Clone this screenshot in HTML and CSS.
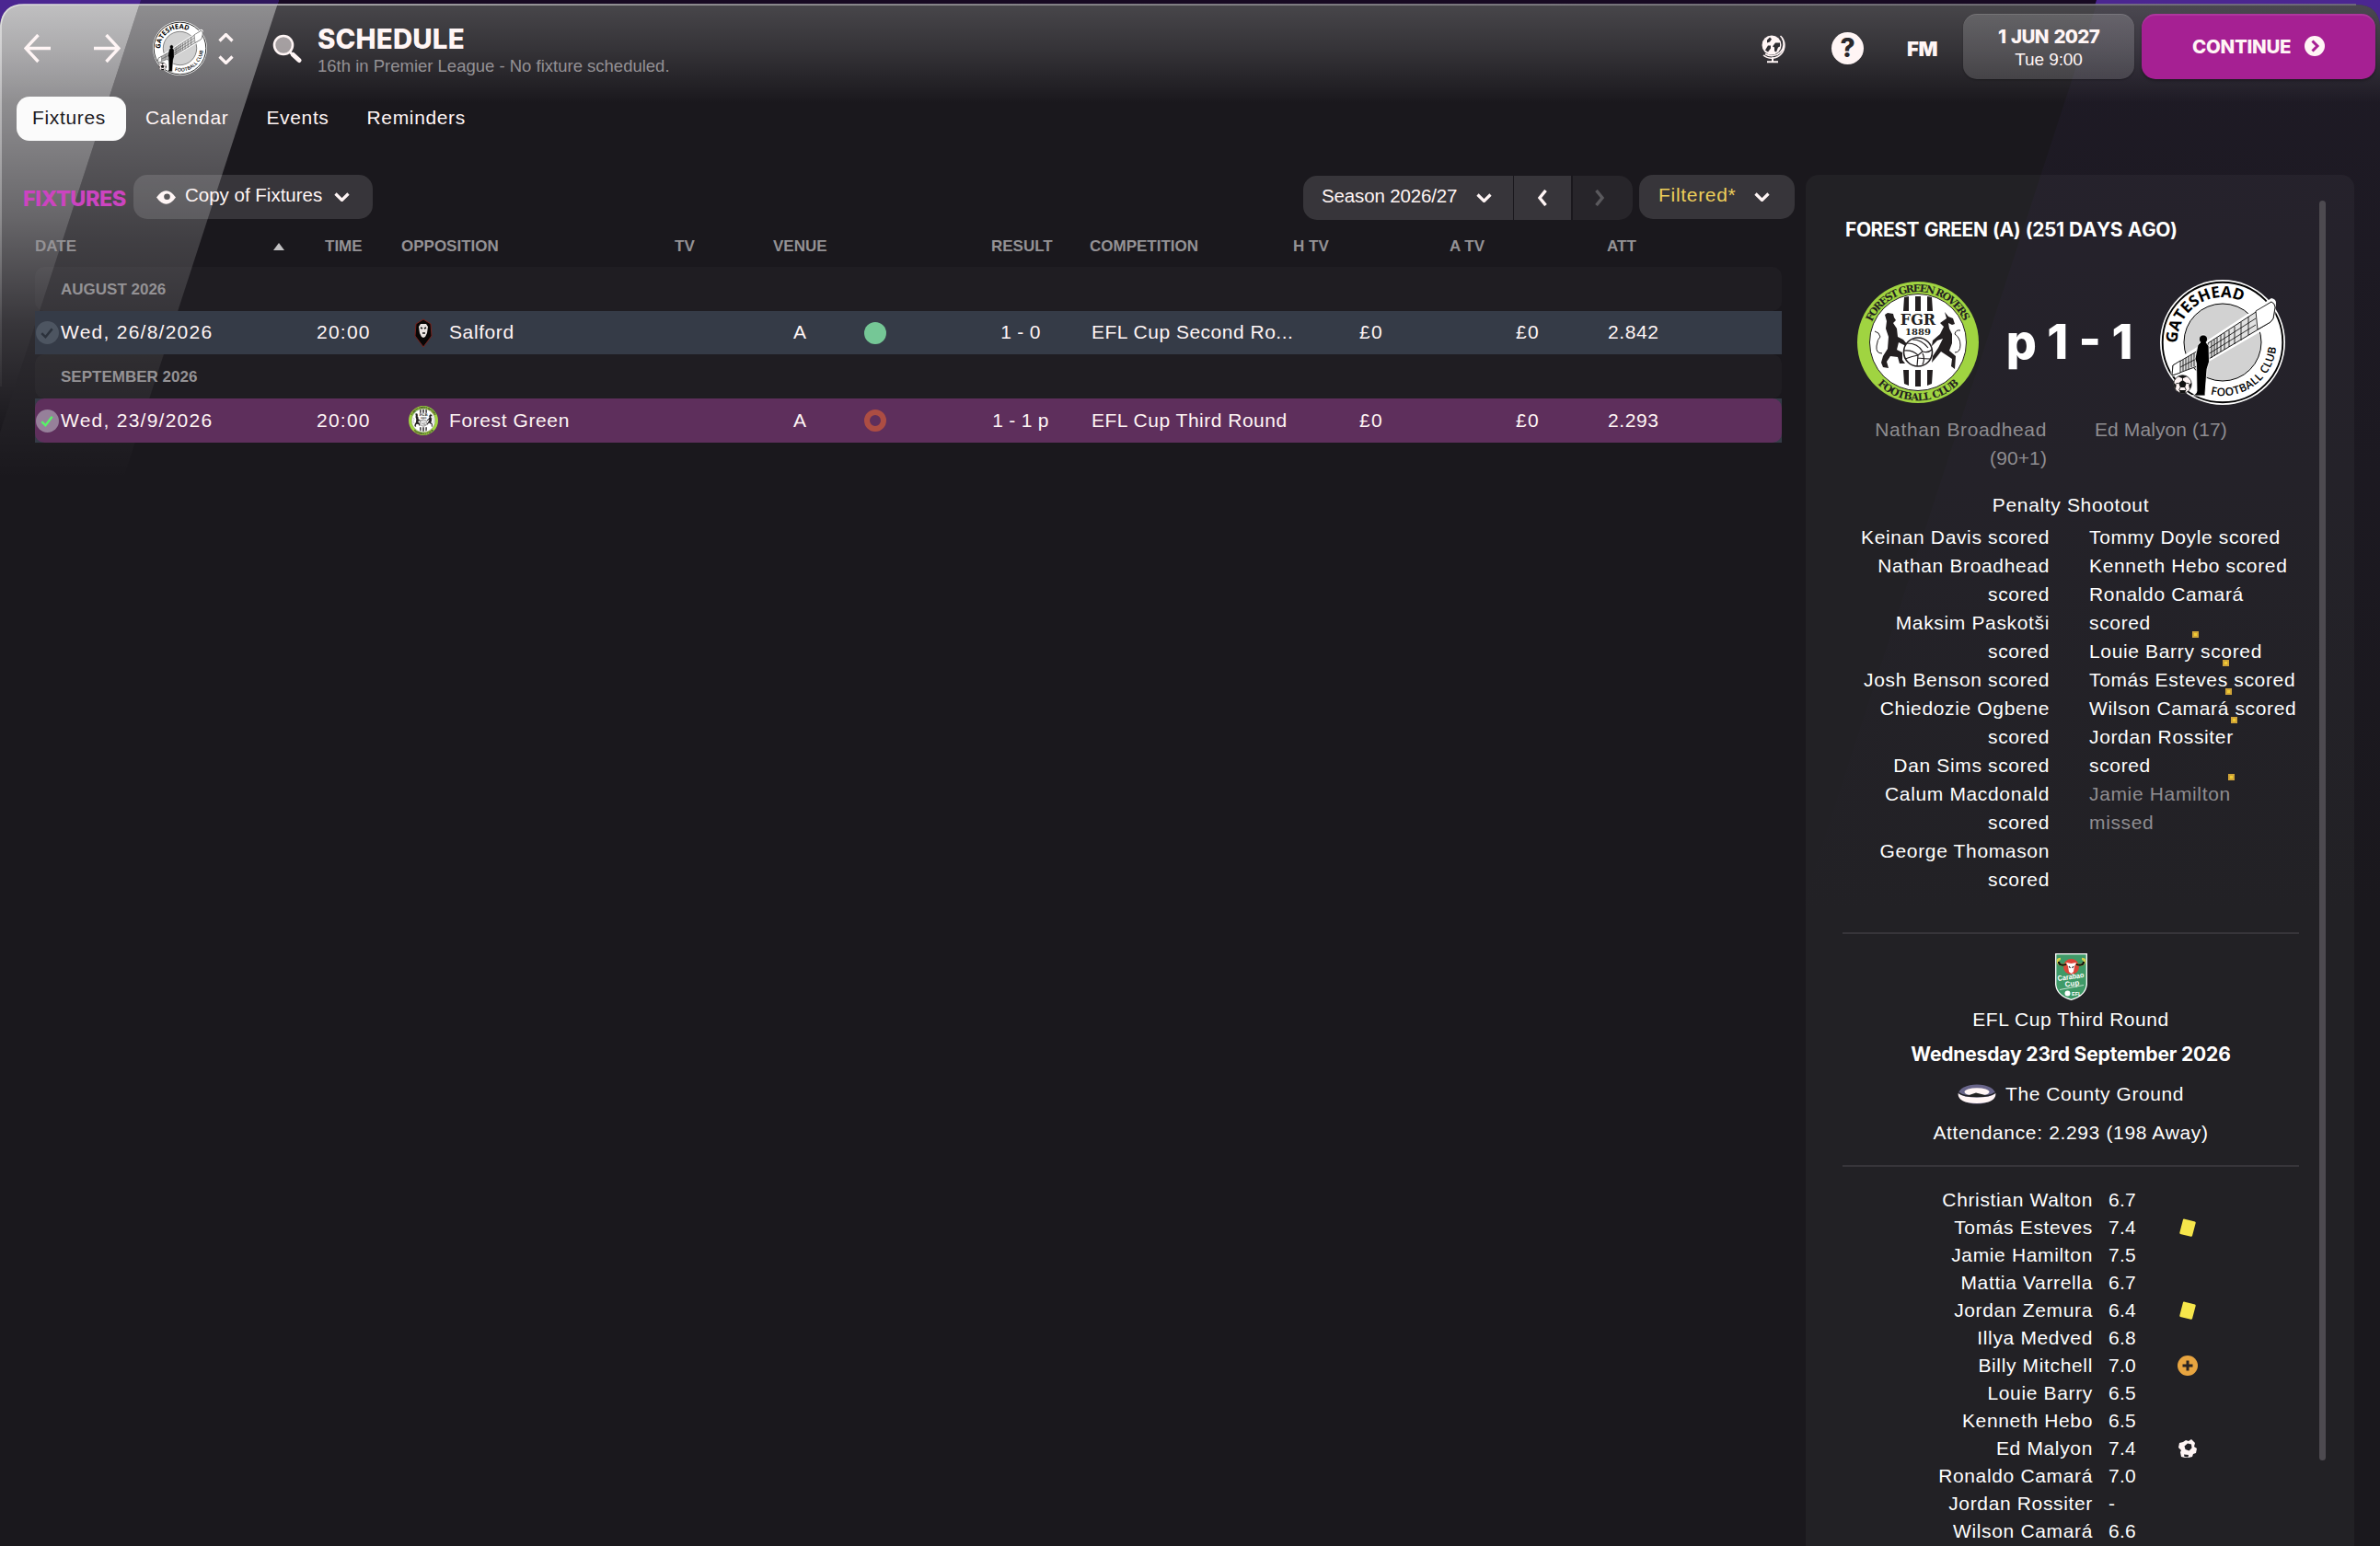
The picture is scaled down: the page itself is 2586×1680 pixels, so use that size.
FILE: index.html
```html
<!DOCTYPE html>
<html lang="en">
<head>
<meta charset="utf-8">
<title>Schedule</title>
<link rel="stylesheet" href="styles.css">
</head>
<body>
<svg class="defs" width="0" height="0" aria-hidden="true">
  <symbol id="chev" viewBox="0 0 16 10"><path d="M1 1.5L8 8.5L15 1.5" fill="none" stroke="currentColor" stroke-width="3.2"/></symbol>
  <symbol id="card" viewBox="0 0 18 20"><path d="M5 .5L17 3.5Q18 4 17.700 5L14 19Q13.600 20 12.500 19.700L1 17Q0 16.600 .3 15.600L4 1.200Q4.300.4 5 .5Z" fill="#f6e64b"/></symbol>
  <symbol id="ball" viewBox="0 0 20 20"><circle cx="10" cy="10" r="9.300" fill="#fff5f5" stroke="#222" stroke-width=".8"/><g fill="#111"><path d="M10 5.800l4 3-1.500 4.600h-5L6 8.800zM5 1.800L10 .7l5 1.100-5 2.200zM.8 8.500l2.700 2.300-.6 4.200A9.300 9.300 0 0 1 .8 8.500zM19.200 8.500l-2.700 2.300.6 4.200a9.300 9.300 0 0 0 2.100-6.500zM6.500 16.200h7l-1 2.800h-5z"/></g><path d="M10 5.800V3.500M14 8.800l3 .7M12.500 13.400l1.200 2.800M7.500 13.400l-1.200 2.800M6 8.800l-3 .7" stroke="#222" stroke-width=".9"/></symbol>
  <symbol id="gates" viewBox="0 0 136 136">
    <circle cx="68" cy="68" r="68" fill="#fff"/>
    <circle cx="68" cy="68" r="65.300" fill="none" stroke="#000" stroke-width="1.900"/>
    <circle cx="68" cy="68" r="42" fill="#d2d2d2" stroke="#000" stroke-width="1"/>
    <path id="g-top" d="M18.700 69A49.300 49.300 0 0 1 109 41" fill="none"/>
    <path id="g-bot" d="M54 124.300A58 58 0 0 0 125.500 58" fill="none"/>
    <path d="M42 72L121 20Q126 21 126 25L125 42L122 49L53 89L12 106L11 91Z" fill="#fff"/>
    <path d="M52 69L121 24Q125 26 125 30L123 42L120 46L53 86ZM43 76L14 93L13 104L43 93Z" fill="#e2e2e2" stroke="#000" stroke-width=".9"/>
    <path d="M104 34L121 24Q125 26 125 30L123 42L120 46L106 54ZM14 93L22 88L22 101L13 104Z" fill="#fff" stroke="#000" stroke-width=".8"/>
    <path d="M56 67v18M59 65v18M62 63v18M66 60v18M70 58v18M75 55v18M81 51v19M88 46v20M96 40v20M52 75L104 42M52 81L104 49M25 87v12M28 85v13M31 83v14M34 81v14M37 80v14M40 78v15M22 95L43 84" stroke="#000" stroke-width=".8"/>
    <path d="M35 126q5-2 5-5l-.5-30L38 86l3-15 3-3a4.600 4.600 0 1 1 6 0l3 4 .5 17-2.500 8-2 26v3z" stroke="#fff" stroke-width=".8"/>
    <use href="#ball" x="14" y="103" width="21" height="21"/>
    <text class="g-name"><textPath href="#g-top" textLength="100">GATESHEAD</textPath></text>
    <text class="g-sub"><textPath href="#g-bot" startOffset="1" textLength="99">FOOTBALL CLUB</textPath></text>
  </symbol>
  <symbol id="fgr" viewBox="0 0 132 132">
    <circle cx="66" cy="66" r="66" fill="#a0d441"/>
    <circle cx="66" cy="66" r="52.500" fill="#fff" stroke="#231f20" stroke-width="1"/>
    <path id="f-top" d="M15.800 44A54.800 54.800 0 0 1 116.200 44" fill="none"/>
    <path id="f-bot" d="M20 109.400A63.100 63.100 0 0 0 112 109.400" fill="none"/>
    <path d="M51 17l5-1v16h-6zM63 16h6v16h-6zM76 16l5 1 1 15h-6zM50 96h6v17l-5-2zM63 96h6v18h-6zM76 96h6l-1 15-5 2z" fill="#231f20"/>
    <path d="M30 36l3-2 6 1 1 4 2 3-3 3 4 6 1 9 6 3 5 6-2 1-8-4-2 8 6 3v8l3 4h-6l-2-7-8-1-4 6 2 7-6-1-2-5 2-7 5-8 1-13-3-9 1-8z" fill="#231f20"/>
    <path d="M27 78q-7 0-6-8t4-10q-1-5-6-6M106 77q6 0 6-8t-6-12q1-5 6-4" fill="none" stroke="#231f20" stroke-width="1"/>
    <path d="M95 33l4 5 5 2 2 6-3 1-4-2 1 6 3 6v10l-3 8 7 6-1 14-4-3 1-8-12-8-4 5-6 7 1-7 6-9 5-10-6 2-6 6 1-6 8-7 4-8-4-4 7-5z" fill="#231f20"/>
    <circle cx="66" cy="76.500" r="15.500" fill="#fff" stroke="#231f20" stroke-width="1.600"/>
    <path d="M54 67q12 0 17 9M51 75q9-1 15 5M52 84q8-3 14-4M71 76q6 2 10-2M66 80l-1 12M71 76l-5 4M60 63q10 0 17 9M71 78q3 6 0 12M66 83q8 1 13 1" fill="none" stroke="#231f20" stroke-width="1.200"/>
    <text class="f-abbr" x="66" y="46.500" text-anchor="middle">FGR</text>
    <text class="f-year" x="66" y="57.500" text-anchor="middle">1889</text>
    <text class="f-ring"><textPath href="#f-top" textLength="126">FOREST GREEN ROVERS</textPath></text>
    <text class="f-ring"><textPath href="#f-bot" startOffset="3" textLength="98">FOOTBALL CLUB</textPath></text>
  </symbol>
</svg>

<div class="window">
  <svg class="sheen" width="2586" height="1680" viewBox="0 0 2586 1680" aria-hidden="true">
    <defs>
      <linearGradient id="top" x1="0" y1="0" x2="0" y2="1"><stop offset="0" stop-color="#fff" stop-opacity=".2"/><stop offset=".45" stop-color="#fff" stop-opacity=".12"/><stop offset="1" stop-color="#fff" stop-opacity="0"/></linearGradient>
      <linearGradient id="b1" gradientUnits="userSpaceOnUse" x1="0" y1="0" x2="0" y2="470"><stop offset="0" stop-color="#fff" stop-opacity=".66"/><stop offset=".3" stop-color="#fff" stop-opacity=".47"/><stop offset=".5" stop-color="#fff" stop-opacity=".34"/><stop offset=".75" stop-color="#fff" stop-opacity=".13"/><stop offset="1" stop-color="#fff" stop-opacity="0"/></linearGradient>
      <linearGradient id="b2" gradientUnits="userSpaceOnUse" x1="0" y1="0" x2="0" y2="520"><stop offset="0" stop-color="#fff" stop-opacity=".39"/><stop offset=".23" stop-color="#fff" stop-opacity=".32"/><stop offset=".5" stop-color="#fff" stop-opacity=".17"/><stop offset=".75" stop-color="#fff" stop-opacity=".07"/><stop offset="1" stop-color="#fff" stop-opacity="0"/></linearGradient>
      <linearGradient id="b3" gradientUnits="userSpaceOnUse" x1="0" y1="0" x2="0" y2="1000"><stop offset="0" stop-color="#3a2a5c" stop-opacity=".13"/><stop offset="1" stop-color="#3a2a5c" stop-opacity="0"/></linearGradient>
      <linearGradient id="edge" x1="0" x2="1" y1="0" y2="0"><stop offset="0" stop-color="#ddd"/><stop offset=".3" stop-color="#aaa"/><stop offset="1" stop-color="#77757c"/></linearGradient>
    </defs>
    <rect width="2586" height="60" fill="#170922"/>
    <path d="M0 0H303L284 60H0ZM2278 0H2586V60H2259Z" fill="#4b2691"/>
    <path d="M153 0H303L284 60H134Z" fill="#2e165c"/>
    <path d="M0 1680V28Q2 5 26 5H2560Q2584 5 2586 28V1680Z" fill="#1a181d"/>
    <path d="M2278 5H2560Q2584 5 2586 28V1000H1953Z" fill="url(#b3)"/>
    <path d="M0 112V28Q2 5 26 5H2560Q2584 5 2586 28V112Z" fill="url(#top)"/>
    <path d="M0 470V28Q2 5 26 5H151.400Z" fill="url(#b1)"/>
    <path d="M151.400 5H301.400L134 520H0V470Z" fill="url(#b2)"/>
    <path d="M1 40V28Q3 5 26 5H2560" fill="none" stroke="url(#edge)" stroke-width="1.600"/>
    <path d="M1 420V40" stroke="url(#b1)" stroke-width="1.500"/>
  </svg>

  <header class="header">
    <nav class="history">
      <svg class="arrow" viewBox="0 0 30 32"><path d="M29 15.500H2M15.500 1L2 15.500L15.500 30" fill="none" stroke="currentColor" stroke-width="3.400"/></svg>
      <svg class="arrow" viewBox="0 0 30 32"><path d="M1 15.500H28M14.500 1L28 15.500L14.500 30" fill="none" stroke="currentColor" stroke-width="3.400"/></svg>
    </nav>
    <svg class="club"><use href="#gates"/></svg>
    <div class="stepper"><svg class="step up"><use href="#chev"/></svg><svg class="step"><use href="#chev"/></svg></div>
    <svg class="search" viewBox="0 0 32 32"><circle cx="12" cy="12" r="10" fill="#fff5f5" fill-opacity=".55" stroke="#fff5f5" stroke-width="2.600"/><path d="M18.500 19L21 21.500" stroke="#fff5f5" stroke-width="3"/><path d="M22.500 22.500L29 28.500" stroke="#fff5f5" stroke-width="5" stroke-linecap="round"/></svg>
    <div class="heading">
      <h1>SCHEDULE</h1>
      <p>16th in Premier League - No fixture scheduled.</p>
    </div>
    <div class="actions">
      <svg class="globe" viewBox="0 0 26 31"><circle cx="11" cy="11.500" r="10.500" fill="#fff5f5"/><path d="M6 6l3-3 2 2-2 3-3 1zM4 17l3-5 3 0 0 3-3 4zM12 13l3-4 5 0 0 4-2 1-2 5-2-1 0-4z" fill="#2e2d31"/><path d="M20.500 1.500A14 14 0 0 1 2 22.500M22 3A13 13 0 0 1 4 21" fill="none" stroke="#fff5f5" stroke-width="1.600"/><path d="M12 25v4M6 29.700h12" stroke="#fff5f5" stroke-width="2"/></svg>
      <div class="help">?</div>
      <div class="fm">FM</div>
      <div class="date"><strong>1 JUN 2027</strong><span>Tue 9:00</span></div>
      <div class="continue">CONTINUE <svg class="go" viewBox="0 0 22 22"><circle cx="11" cy="11" r="11" fill="#fff5f5"/><path d="M8.500 5.500L14 11l-5.500 5.500" fill="none" stroke="#a62093" stroke-width="3"/></svg></div>
    </div>
  </header>

  <nav class="tabs">
    <a class="tab active">Fixtures</a><a class="tab">Calendar</a><a class="tab">Events</a><a class="tab">Reminders</a>
  </nav>

  <div class="content">
    <main class="fixtures">
      <div class="toolbar">
        <h2>FIXTURES</h2>
        <div class="button view">
          <svg class="eye" viewBox="0 0 21 15"><path d="M0 7.500Q10.500-7 21 7.500Q10.500 22 0 7.500Z" fill="#fff5f5"/><circle cx="11.500" cy="6.800" r="3.300" fill="#59575a"/></svg>
          <span>Copy of Fixtures</span><svg class="chev"><use href="#chev"/></svg>
        </div>
        <div class="season">
          <div class="button pick"><span>Season 2026/27</span><svg class="chev"><use href="#chev"/></svg></div>
          <div class="button prev"><svg class="side" viewBox="0 0 10 18"><path d="M8.500 1L2 9L8.500 17" fill="none" stroke="currentColor" stroke-width="3.400"/></svg></div>
          <div class="button next"><svg class="side" viewBox="0 0 10 18"><path d="M1.500 1L8 9L1.500 17" fill="none" stroke="currentColor" stroke-width="3.400"/></svg></div>
        </div>
        <div class="button filter"><span>Filtered*</span><svg class="chev"><use href="#chev"/></svg></div>
      </div>

      <div class="table">
        <div class="cols">
          <span>DATE</span><svg class="sort" viewBox="0 0 12 8"><path d="M6 0L12 8H0Z" fill="#c2c1c3"/></svg><span>TIME</span><span>OPPOSITION</span><span>TV</span><span>VENUE</span><span>RESULT</span><span>COMPETITION</span><span>H TV</span><span>A TV</span><span>ATT</span>
        </div>
        <div class="group">AUGUST 2026</div>
        <div class="row">
          <svg class="tick" viewBox="0 0 24 24"><circle cx="12" cy="12" r="12" fill="#4d5561"/><path d="M6 12.500l4 4 7-8.500" fill="none" stroke="#2c323c" stroke-width="2.400"/></svg>
          <span class="num">Wed, 26/8/2026</span><span class="num">20:00</span>
          <svg class="badge" viewBox="0 0 24 32"><path d="M12 1L20 6L21 19L12 31L3 19L4 6Z" fill="#080606" stroke="#7a221c" stroke-width="1"/><path d="M9 6l6 0 2 3-1 7-2 4-2 1-2-1-2-4-1-7z" fill="#e8e2e0"/><path d="M9 10l2 1M15 10l-2 1M11 16h3" stroke="#111" stroke-width="1.500"/></svg>
          <span>Salford</span><span>A</span><i class="dot win"></i><span class="result">1 - 0</span><span class="comp">EFL Cup Second Ro...</span><span class="num">£0</span><span class="num">£0</span><span>2.842</span>
        </div>
        <div class="group">SEPTEMBER 2026</div>
        <div class="row-base"><div class="row selected">
          <svg class="tick" viewBox="0 0 24 24"><circle cx="12" cy="12" r="12" fill="#96809a"/><path d="M6 12.500l4 4 7-9" fill="none" stroke="#58f268" stroke-width="2.400"/></svg>
          <span class="num">Wed, 23/9/2026</span><span class="num">20:00</span>
          <svg class="badge"><use href="#fgr"/></svg>
          <span>Forest Green</span><span>A</span><i class="dot loss"></i><span class="result">1 - 1 p</span><span class="comp">EFL Cup Third Round</span><span class="num">£0</span><span class="num">£0</span><span>2.293</span>
        </div></div>
      </div>
    </main>

    <aside class="panel">
      <div class="details">
        <h3>FOREST GREEN (A) (251 DAYS AGO)</h3>
        <div class="score">
          <svg class="home"><use href="#fgr"/></svg>
          <strong>p 1 - 1</strong>
          <svg class="away"><use href="#gates"/></svg>
        </div>
        <div class="scorers"><div>Nathan Broadhead<br><span class="minute">(90+1)</span></div><div><span class="minute">Ed Malyon (17)</span></div></div>
        <p class="pens-title">Penalty Shootout</p>
        <div class="pens">
          <div>Keinan Davis scored<br>Nathan Broadhead<br>scored<br>Maksim Paskotši<br>scored<br>Josh Benson scored<br>Chiedozie Ogbene<br>scored<br>Dan Sims scored<br>Calum Macdonald<br>scored<br>George Thomason<br>scored</div>
          <div>Tommy Doyle scored<br>Kenneth Hebo scored<br>Ronaldo Camará<br>scored<br>Louie Barry scored<br>Tomás Esteves scored<br>Wilson Camará scored<br>Jordan Rossiter<br>scored<br><span class="missed">Jamie Hamilton<br>missed</span>
            <i class="mark m1"></i><i class="mark m2"></i><i class="mark m3"></i><i class="mark m4"></i><i class="mark m5"></i>
          </div>
        </div>
        <section class="info">
          <svg class="cup" viewBox="0 0 35 51"><path d="M.7.700H34.300V34Q33 46 17.500 50.300Q2 46 .7 34Z" fill="#3f9a68" stroke="#fff" stroke-width="1.300"/><circle cx="17.500" cy="14.500" r="8.500" fill="#dc4438"/><path d="M12 12Q3 14 3 8Q3 6 6 6M23 12Q32 14 32 8Q32 6 29 6" fill="none" stroke="#d8d04a" stroke-width="2.600"/><path d="M12 12Q4 14 4 9M23 12Q31 14 31 9" fill="none" stroke="#111" stroke-width="2.200"/><path d="M12 10l5.500 1 5.500-1-2 4-1 6-2.500 2-2.500-2-1-6z" fill="#fff"/><path d="M15 14l1.500 2M20 14l-1.500 2" stroke="#222" stroke-width="1.200"/><g fill="#fff" class="cup-text"><text x="3" y="30" transform="rotate(-8 3 30)" textLength="29" lengthAdjust="spacingAndGlyphs">Carabao</text><text x="11" y="36.500" transform="rotate(-8 11 36)">Cup</text><path d="M5 39.500L31 34.500" stroke="#fff" stroke-width=".7"/><circle cx="13.500" cy="43.500" r="3"/><text class="cup-efl" x="18" y="45.500">EFL</text></g></svg>
          <p>EFL Cup Third Round</p>
          <p class="day">Wednesday 23rd September 2026</p>
          <p class="ground"><svg viewBox="0 0 42 22"><ellipse cx="21" cy="11" rx="20" ry="10.500" fill="#68658a"/><path d="M.5 10Q.5 21 21 21T41.500 10Q36 14.500 21 14.500T.5 10Z" fill="#fff5f5"/><path d="M1.500 9.500Q6 13.500 21 13.500T40.500 9.500" fill="none" stroke="#222" stroke-width="1.600"/><ellipse cx="21" cy="8.500" rx="13.500" ry="4.300" fill="#fff5f5"/><path d="M11 12.500L20 9.500L32 12.500Q21 14.500 11 12.500Z" fill="#222"/></svg><span>The County Ground</span></p>
          <p class="att">Attendance: 2.293 (198 Away)</p>
        </section>
        <section class="players">
          <span>Christian Walton</span><span>6.7</span><i></i>
          <span>Tomás Esteves</span><span>7.4</span><i><svg class="card"><use href="#card"/></svg></i>
          <span>Jamie Hamilton</span><span>7.5</span><i></i>
          <span>Mattia Varrella</span><span>6.7</span><i></i>
          <span>Jordan Zemura</span><span>6.4</span><i><svg class="card"><use href="#card"/></svg></i>
          <span>Illya Medved</span><span>6.8</span><i></i>
          <span>Billy Mitchell</span><span>7.0</span><i><svg class="plus" viewBox="0 0 22 22"><circle cx="11" cy="11" r="11" fill="#e8a540"/><path d="M11 5.500v11M5.500 11h11" stroke="#2a2422" stroke-width="3"/></svg></i>
          <span>Louie Barry</span><span>6.5</span><i></i>
          <span>Kenneth Hebo</span><span>6.5</span><i></i>
          <span>Ed Malyon</span><span>7.4</span><i><svg class="goal" viewBox="0 0 22 22"><path d="M9 2l3 1 3-2 4 4-1 4 3 2-1 5-3 1-1 3-4 1H8l-4-1-1-5 1-2-3-3 1-5 4-1z" fill="#fff5f5"/><path d="M11 5.500l4 1 .5 4-3 3-4-1.500-1-3.500zM7 17.500l5 .5-.5 2.500-4-.5z" fill="#222025"/></svg></i>
          <span>Ronaldo Camará</span><span>7.0</span><i></i>
          <span>Jordan Rossiter</span><span>-</span><i></i>
          <span>Wilson Camará</span><span>6.6</span><i></i>
        </section>
      </div>
      <div class="scrollbar"></div>
    </aside>
  </div>
</div>
</body>
</html>
```
FILE: styles.css
```css
* { box-sizing: border-box; }
body {
  margin: 0;
  width: 2586px;
  height: 1680px;
  overflow: hidden;
  background: #1a181d;
  color: #fff5f5;
  font: 21px/31px "Liberation Sans", Arial, sans-serif;
  letter-spacing: .65px;
}
h1, h2, h3, p { margin: 0; }
.defs { position: absolute; }
.window {
  position: relative;
  isolation: isolate;
  height: 1680px;
  padding-top: 4px;
  display: flex;
  flex-direction: column;
  overflow: hidden;
}
.sheen { position: absolute; inset: 0; z-index: -1; }

/* header */
.header { display: flex; align-items: center; height: 97px; padding: 0 5px 0 26px; flex: none; }
.history { display: flex; gap: 45px; }
.arrow { width: 30px; height: 32px; display: block; }
.club { width: 59px; height: 59px; margin-left: 35px; }
.stepper { display: flex; flex-direction: column; gap: 14px; margin-left: 12px; }
.step { width: 17px; height: 10px; display: block; }
.step.up { transform: scaleY(-1); }
.search { width: 32px; height: 32px; margin-left: 42px; }
.heading { margin-left: 17px; margin-top: 5px; }
.heading h1 { font: 800 29.500px/34px Inter, sans-serif; letter-spacing: .1px; }
.heading p { font-size: 18.500px; line-height: 26px; letter-spacing: 0; color: #949195; }
.actions { display: flex; align-items: center; margin-left: auto; }
.globe { width: 26px; height: 32px; }
.help {
  width: 35px; height: 35px; margin-left: 50px; border-radius: 50%;
  background: #fff5f5; color: #29282c; text-align: center;
  font: 800 28px/35px Inter, sans-serif; letter-spacing: 0;
}
.fm { margin-left: 47px; width: 61px; font: 900 22px/30px Inter, sans-serif; letter-spacing: -.3px; }
.date {
  width: 186px; height: 71px; border-radius: 15px; margin-top: -4px;
  background: linear-gradient(rgba(255,255,255,.17), rgba(255,255,255,.14));
  box-shadow: inset 0 1px rgba(255,255,255,.12), 0 1px 2px rgba(0,0,0,.3);
  display: flex; flex-direction: column; align-items: center; padding-top: 11px;
}
.date strong { font: 800 20.500px/28px Inter, sans-serif; letter-spacing: -.7px; word-spacing: 2px; font-kerning: none; }
.date span { font-size: 19px; line-height: 22px; letter-spacing: -.1px; }
.continue {
  width: 254px; height: 71px; border-radius: 15px; margin: -4px 0 0 8px;
  background: #a62093; box-shadow: inset 0 2px rgba(255,255,255,.1), 0 2px 3px rgba(0,0,0,.3);
  display: flex; align-items: center; padding-left: 55px;
  font: 800 20.500px/30px Inter, sans-serif; letter-spacing: -.3px;
}
.go { width: 22px; height: 22px; margin: -2px 0 0 15px; }

/* tabs */
.tabs { display: flex; height: 48px; margin: 4px 0 37px 18px; flex: none; }
.tab { line-height: 45px; padding: 0 20px 0 21px; letter-spacing: .65px; }
.tab.active { background: #fbfbfb; color: #1c1a1e; border-radius: 14px; width: 119px; padding: 0 17px; }

/* columns */
.content { display: flex; gap: 12px; flex: 1; min-height: 0; }
.fixtures { width: 1950px; }
.toolbar { display: flex; height: 49px; padding-left: 25px; }
.toolbar h2 {
  width: 120px; color: #cc44c0; white-space: nowrap;
  font: 800 23.500px/52px Inter, sans-serif; letter-spacing: -.5px;
}
.button { height: 48px; display: flex; align-items: center; background: rgba(255,255,255,.13); border-radius: 15px; white-space: nowrap; }
.button span { font-size: 20.500px; line-height: 40px; margin-top: -4px; letter-spacing: 0; }
.chev { width: 17px; height: 10px; }
.view { width: 260px; padding-left: 25px; }
.eye { width: 21px; height: 15px; margin-right: 10px; }
.view span { width: 150px; }
.view .chev { margin-left: 12px; }
.season { display: flex; margin: 1px 7px 0 auto; }
.pick { width: 228px; padding: 0 23px 0 20px; justify-content: space-between; border-radius: 15px 0 0 15px; }
.button.pick span { letter-spacing: -.15px; }
.prev { width: 62px; margin-left: 1px; border-radius: 0; padding-left: 26px; }
.next { width: 65px; margin-left: 2px; border-radius: 0 15px 15px 0; padding-left: 24px; background: rgba(255,255,255,.06); color: #5a595d; }
.side { width: 10px; height: 18px; }
.filter { width: 169px; padding: 0 27px 0 21px; justify-content: space-between; color: #edcf5a; }
.button.filter span { font-size: 21px; letter-spacing: .7px; }
.filter .chev { color: #fff5f5; }

/* fixtures table */
.table { margin: 10px 14px 0 38px; }
.cols, .group { font-size: 17px; font-weight: 700; color: #949295; letter-spacing: 0; }
.cols {
  display: grid; align-items: center; height: 41px; line-height: 36px; padding-bottom: 4px;
  grid-template-columns: 259px 56px 83px 297px 107px 237px 107px 221px 170px 171px 1fr;
}
.sort { width: 12px; height: 8px; }
.group { height: 48px; line-height: 49px; padding-left: 28px; background: rgba(255,255,255,.025); border-radius: 10px; }
.row {
  display: grid; align-items: center; height: 47px; line-height: 45px; background: #353b47; white-space: nowrap;
  grid-template-columns: 28px 278px 92px 52px 374px 77px 93px 154px 291px 170px 100px 1fr;
}
.row > span { height: 47px; letter-spacing: .6px; }
.row > .num { letter-spacing: 1.250px; }
.tick { width: 25px; height: 25px; margin-left: 1px; }
.badge { width: 32px; height: 32px; margin-left: 8px; }
.dot { width: 24px; height: 24px; border-radius: 50%; }
.win { background: #75c796; }
.loss { border: 6.500px solid #ad4d43; }
.row .result { text-align: center; letter-spacing: .3px; }
.row .comp { letter-spacing: .5px; }
.row-base { background: #353b47; }
.selected { height: 48px; background: #5e2f5c; border-radius: 10px; }

/* match panel */
.panel { width: 596px; padding: 28px 0 0 40px; background: rgba(255,255,255,.04); border-radius: 14px 14px 0 0; display: flex; color: #fff; }
.details { width: 496px; }
.scrollbar { width: 7px; height: 1369px; margin-left: 22px; border-radius: 4px; background: #4d4a50; }
.details h3 { padding-left: 3px; font: 700 21px/32px Inter, sans-serif; letter-spacing: -.45px; word-spacing: 1px; font-kerning: none; margin-top: 16px; white-space: nowrap; }
.score { display: flex; align-items: center; margin-top: 38px; padding-left: 16px; height: 136px; }
.home { width: 132px; height: 132px; }
.away { width: 136px; height: 136px; }
.score strong { width: 197px; text-align: center; font: 800 52px/62px Inter, sans-serif; letter-spacing: 0; font-kerning: none; white-space: nowrap; }
.scorers { display: grid; grid-template-columns: 222px 1fr; gap: 52px; margin-top: 11px; height: 62px; color: #8f8d91; white-space: nowrap; }
.minute { letter-spacing: .1px; }
.scorers div:first-child, .pens div:first-child { text-align: right; }
.pens-title { text-align: center; margin-top: 20px; }
.pens { display: grid; grid-template-columns: 225px 1fr; gap: 43px; margin-top: 4px; height: 403px; white-space: nowrap; }
.pens > div { position: relative; }
.missed { color: #8f8d91; }
.mark { position: absolute; width: 7px; height: 7px; border: 2px solid #d0a437; background: #f0cc33; }
.m1 { left: 112px; top: 118px; }
.m2 { left: 145px; top: 149px; }
.m3 { left: 148px; top: 180px; }
.m4 { left: 154px; top: 211px; }
.m5 { left: 151px; top: 273px; }
.info { margin-top: 42px; border: solid #37353a; border-width: 2px 0; height: 255px; padding-top: 21px; display: flex; flex-direction: column; align-items: center; }
.info p { letter-spacing: .55px; white-space: nowrap; }
.cup { width: 35px; height: 51px; margin-bottom: 5px; }
.info .day { margin-top: 7px; font: 700 21px/31px Inter, sans-serif; letter-spacing: -.15px; }
.ground { display: flex; align-items: center; gap: 10px; margin-top: 12px; }
.ground svg { width: 42px; height: 22px; }
.info .att { margin-top: 11px; letter-spacing: .65px; }
.players { display: grid; grid-template-columns: 272px 103px 1fr; column-gap: 0; grid-auto-rows: 30px; line-height: 31px; margin-top: 20px; white-space: nowrap; }
.players span:nth-child(3n+1) { text-align: right; }
.players span:nth-child(3n+2) { padding-left: 17px; letter-spacing: .3px; }
.players i { display: flex; width: 0; justify-content: center; align-items: center; padding-top: 1px; }
.players svg { flex: none; width: 22px; height: 22px; }
.players .card { width: 18px; height: 20px; }

/* crest lettering */
.g-name { font: 700 17px "Open Sans", sans-serif; letter-spacing: 0; }
.g-sub { font: 600 12px "Open Sans", sans-serif; letter-spacing: 0; }
.f-abbr { font: 700 16px "DejaVu Serif", serif; letter-spacing: 0; fill: #231f20; }
.f-year { font: 700 10px "DejaVu Serif", serif; letter-spacing: 0; fill: #231f20; }
.f-ring { font: 700 11px "DejaVu Serif", serif; letter-spacing: 0; fill: #231f20; }
.cup-text { font: 700 8px "Liberation Sans", sans-serif; letter-spacing: 0; }
.cup-efl { font-size: 5.500px; }
```
